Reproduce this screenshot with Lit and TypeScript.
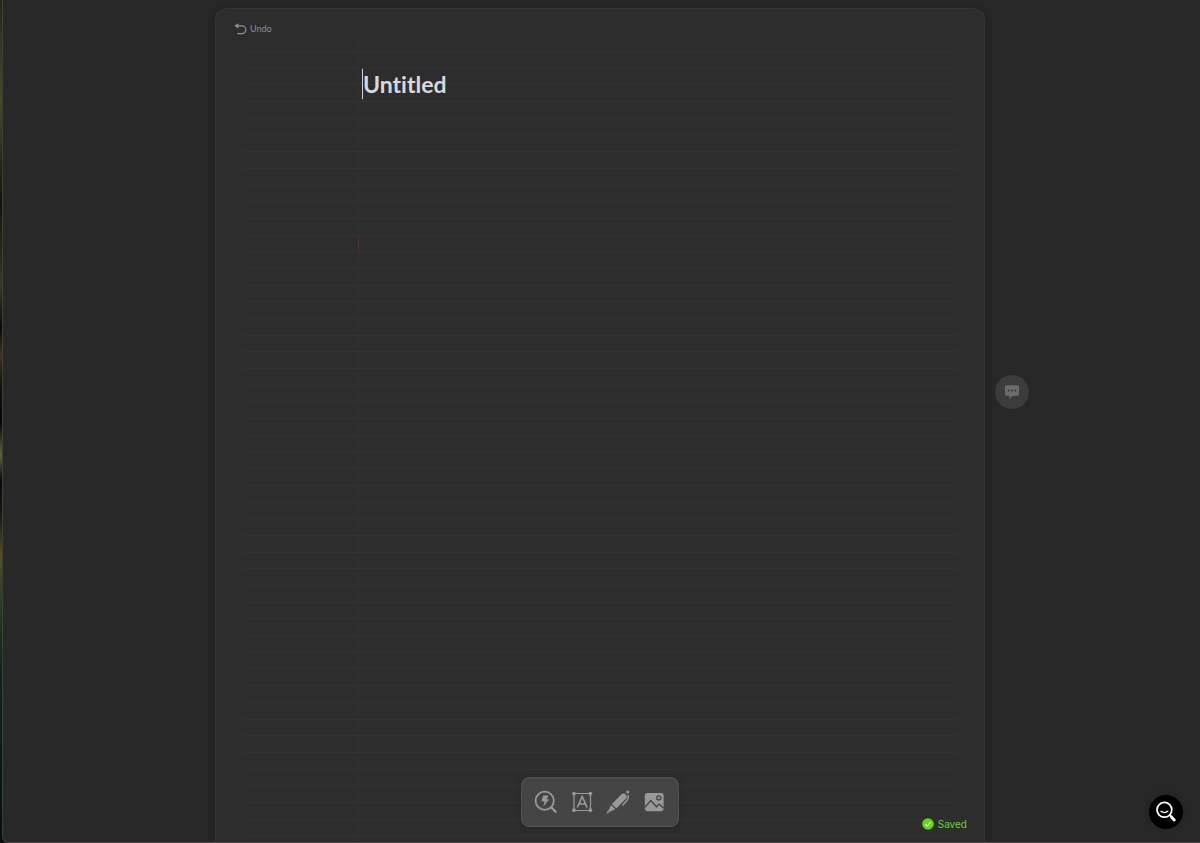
import { LitElement, html, css, svg } from "lit";
import { customElement, property, state } from "lit/decorators.js";

const icons: Record<string, unknown> = {
  search: svg`<g fill="none" stroke="currentColor" stroke-width="1.8"><circle cx="10.7" cy="10.8" r="9.1"/><path d="M17.4 17.5l5 5" stroke-width="2.2"/></g><path fill="currentColor" d="M9.4 5.6h5l-1.6 3.7h2.4l-5.9 7.2 1.2-5.2H7.3z"/>`,
  text: svg`<path d="M4 3.500h16.500v17H4z" fill="none" stroke="currentColor" stroke-width="1.200"/><g fill="currentColor"><circle cx="4" cy="3.600" r="1.900"/><circle cx="20.400" cy="3.600" r="1.900"/><circle cx="4" cy="20.200" r="1.900"/><circle cx="20.400" cy="20.200" r="1.900"/></g><path d="M7.300 17.500l4.900-11 4.900 11M9 14h6.400" fill="none" stroke="currentColor" stroke-width="1.700"/>`,
  pen: svg`<g fill="currentColor"><path d="M5.900 14L15.500 4.300Q17.100 2.900 18.600 3.700L20.700 5.700Q21.400 7.200 20.100 8.600L10.300 18.400z"/><path d="M5 15l4.300 4.300-6.100 2.800-1-1z"/><circle cx="1.900" cy="22.300" r="1.100"/><circle cx="21.700" cy="2.100" r="1.600"/></g><path d="M22.300 5.800q.500 2.400-1 4.200l-4.400 5" fill="none" stroke="currentColor" stroke-width="1.500" stroke-linecap="round"/><path d="M4.900 13.900l5.500 5.500" stroke="#454545" stroke-width="1"/>`,
  image: svg`<rect x="2.800" y="3" width="18.800" height="18.200" rx="2.400" fill="currentColor"/><g fill="none" stroke="#454545" stroke-width="1.400"><circle cx="16.800" cy="7.900" r="2"/><path d="M2.800 17.200l6-6.700 5.700 6.200 2.700-2.600 4.400 4.200"/></g>`,
};

@customElement("tool-button")
export class ToolButton extends LitElement {
  @property() icon = "search";
  @property() label = "";

  static styles = css`
    :host { display: block; }
    button { display: block; padding: 0; border: 0; background: none; color: #999; cursor: pointer; }
    svg { display: block; width: 24px; height: 24px; }
  `;

  render() {
    return html`<button aria-label=${this.label}><svg viewBox="0 0 24 24">${icons[this.icon]}</svg></button>`;
  }
}

@customElement("app-root")
export class AppRoot extends LitElement {
  @state() private noteTitle = "Untitled";

  static styles = css`
    :host { display: block; height: 100vh; background: #050a07; font-family: Inter, "Liberation Sans", sans-serif; }
    * { box-sizing: border-box; }
    button { padding: 0; border: 0; background: none; font: inherit; color: inherit; cursor: pointer; }
    svg { display: block; }
    .desktop {
      height: 100%; padding: 0 0 0 2px;
      background: linear-gradient(#26281a, #454a28 12%, #10150a 24%, #353a20 34%, #080b05 39%, #4b2e20 42%, #11120a 46%, #050503 50%, #62613b 54%, #080806 57%, #1a1810 61%, #5a4b28 66%, #293e20 71%, #102318 80%, #07100c);
    }
    .window {
      position: relative; height: 100%; overflow: hidden; background: #282828;
      border-left: 1px solid #3b403a; border-bottom: 1px solid #514548; border-bottom-left-radius: 6px;
      display: grid; grid-template-columns: 1fr minmax(0, 770px) 1fr; padding: 8px 3px 0 0;
    }
    .sheet {
      grid-column: 2; position: relative; display: flex; flex-direction: column; min-height: 0;
      background: #2d2d2d; border: 1px solid #363636; border-bottom: 0; border-radius: 12px 12px 0 0;
      box-shadow: 0 0 8px #1e1e1e;
    }
    .undo { display: flex; align-items: center; gap: 3px; margin: 14px 0 0 18px; height: 12px; align-self: flex-start; font-family: Lato, sans-serif; font-size: 9px; line-height: 14px; color: #929292; }
    .undo svg { width: 13px; height: 12px; }
    .paper { flex: 1; min-height: 0; position: relative; margin: 6px 28px 0; }
    .rules { height: 100%; display: flex; flex-direction: column; justify-content: space-between; padding: 10px 0 5px; }
    .rule { height: 1px; background: #333; }
    .margin { position: absolute; top: 0; bottom: 0; left: 16%; width: 1px; background: #372f2f; }
    .mark { position: absolute; top: 195px; left: 16%; width: 1px; height: 15px; background: #4a3230; }
    .heading { position: absolute; top: 28px; left: 118px; right: 0; display: flex; }
    .caret { width: 1px; height: 30px; background: #d0d0d0; }
    .title { flex: 1; min-width: 0; height: 30px; padding: 0; border: 0; outline: 0; background: none; color: #d8d8dc; font-family: Lato, sans-serif; font-size: 23px; line-height: 30px; font-weight: 700; font-variant-ligatures: none; }
    .toolbar {
      position: absolute; left: 50%; bottom: 15px; transform: translateX(-50%);
      display: flex; gap: 12px; padding: 12px; border: 1px solid #535353; border-radius: 8px; background: #454545; box-shadow: 0 1px 4px #242424;
    }
    .saved { position: absolute; right: 17px; bottom: 12px; display: flex; align-items: center; gap: 4px; font-size: 10px; line-height: 12px; color: #65d238; }
    .saved svg { width: 12px; height: 12px; }
    .side { display: flex; align-items: center; padding: 0 0 66px 10px; }
    .comment { width: 34px; height: 34px; border-radius: 50%; background: #3c3c3c; color: #6c6c6c; display: grid; place-items: center; }
    .comment svg { width: 16px; height: 16px; }
    .help { position: absolute; right: 17px; bottom: 13px; width: 34px; height: 34px; border-radius: 50%; background: #000; display: grid; place-items: center; box-shadow: 0 0 8px #222; }
    .help svg { width: 24px; height: 24px; }
  `;

  private rename(e: Event) {
    this.noteTitle = (e.target as HTMLInputElement).value;
  }

  render() {
    return html`
      <div class="desktop">
        <main class="window">
          <section class="sheet">
            <button class="undo">
              <svg viewBox="0 0 13 12"><path d="M2 2.800h5.900a3.900 3.900 0 0 1 0 7.800H3.400" fill="none" stroke="currentColor" stroke-width="1.200"/><path d="M4.400.2v5.200L.3 2.800z" fill="currentColor"/></svg>
              <span>Undo</span>
            </button>
            <div class="paper">
              <div class="rules">${Array.from({ length: 48 }, () => html`<div class="rule"></div>`)}</div>
              <div class="margin"></div>
              <div class="mark"></div>
              <div class="heading">
                <span class="caret"></span>
                <input class="title" aria-label="Note title" .value=${this.noteTitle} @input=${this.rename} />
              </div>
            </div>
            <nav class="toolbar" aria-label="Tools">
              <tool-button icon="search" label="Quick search"></tool-button>
              <tool-button icon="text" label="Text"></tool-button>
              <tool-button icon="pen" label="Draw"></tool-button>
              <tool-button icon="image" label="Image"></tool-button>
            </nav>
            <div class="saved" role="status">
              <svg viewBox="0 0 12 12"><circle cx="6" cy="6" r="5.800" fill="#65d41c"/><path d="M3.300 6.200l1.900 1.900 3.500-4" fill="none" stroke="#d9f5cb" stroke-width="1.200"/></svg>
              <span>Saved</span>
            </div>
          </section>
          <aside class="side">
            <button class="comment" aria-label="Comments">
              <svg viewBox="0 0 16 16"><path d="M1 2.300Q1 1.200 2.100 1.200h11.800q1.100 0 1.100 1.100v8.300q0 1.100-1.100 1.100H8.800L5.300 15v-3.300H2.100Q1 11.700 1 10.600z" fill="currentColor"/><g fill="#383838"><circle cx="4.700" cy="6.500" r="1"/><circle cx="8" cy="6.500" r="1"/><circle cx="11.300" cy="6.500" r="1"/></g></svg>
            </button>
          </aside>
          <button class="help" aria-label="Find">
            <svg viewBox="0 0 24 24" fill="none" stroke="#fff" stroke-linecap="round"><circle cx="10.400" cy="9.800" r="7.400" stroke-width="1.700"/><path d="M7 11.300q3.400 2.600 6.800 0" stroke-width="1.300"/><path d="M15.800 15.200l1.500 1.500" stroke-width="1.700"/><path d="M17.400 16.900l2.800 3" stroke-width="3"/></svg>
          </button>
        </main>
      </div>`;
  }
}
